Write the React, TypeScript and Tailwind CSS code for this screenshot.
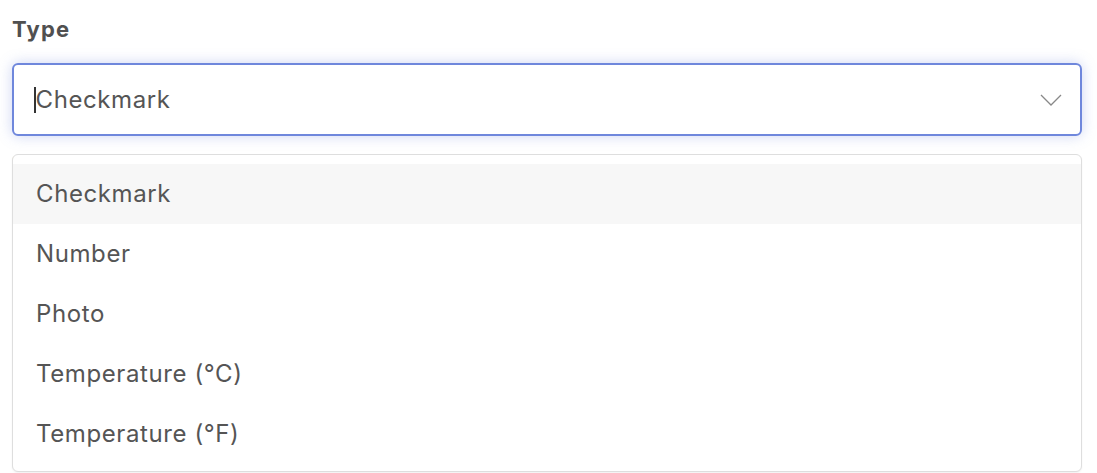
const options = ['Checkmark', 'Number', 'Photo', 'Temperature (°C)', 'Temperature (°F)'];

const App = () => {
  const selected = 'Checkmark';

  return (
    <div className="bg-white w-[1097px] h-[473px] px-3 pt-[12px] font-['Inter',sans-serif] text-[#555]">
      <label className="block text-[22px] font-bold leading-[34px] tracking-[1.2px] text-[#505050]">Type</label>
      <div className="relative mt-[17px]">
        <div className="h-[73px] w-[1070px] rounded-[6px] border-2 border-[#6f87dc] shadow-[0_0_14px_rgba(111,135,220,0.35)] flex items-center pl-[20px] pr-[18px]">
          <span className="w-[1.5px] h-[26px] bg-[#333]" />
          <span className="flex-1 text-[24px] tracking-[0.6px]">{selected}</span>
          <svg width="22" height="12" viewBox="0 0 22 12" fill="none" className="text-[#888]">
            <path d="M1 1l10 10 10-10" stroke="currentColor" strokeWidth="1.3" />
          </svg>
        </div>
        <p className="mt-[16px] text-[14px] leading-[20px] text-[#999]">Select the type of value that staff will record for this item in the log.</p>

        <ul className="absolute left-0 top-[91px] w-[1070px] rounded-[6px] border border-[#dedede] bg-white pt-[9px] pb-[7px] shadow-[0_1px_2px_rgba(0,0,0,0.06)]">
          {options.map((o) => (
            <li
              key={o}
              className={`h-[60px] flex items-center pl-[23px] text-[24px] tracking-[0.6px] ${o === selected ? 'bg-[#f7f7f7]' : ''}`}
            >
              {o}
            </li>
          ))}
        </ul>
      </div>
    </div>
  );
};

export default App;
